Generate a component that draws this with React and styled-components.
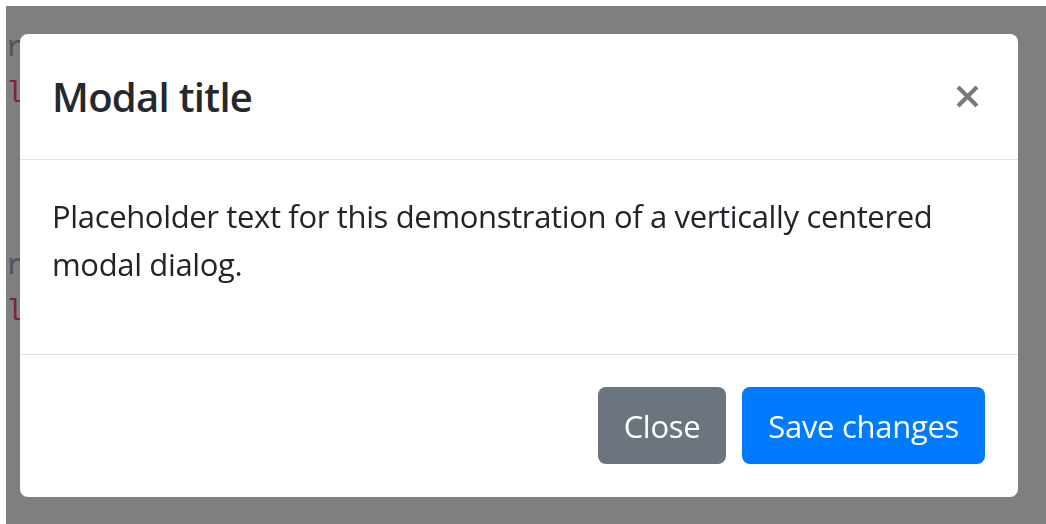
import React from "react";
import styled, { createGlobalStyle } from "styled-components";

const GlobalStyle = createGlobalStyle`
  html, body {
    margin: 0;
    padding: 0;
    background: #fff;
  }
  body {
    font-family: "Open Sans", "Noto Sans", sans-serif;
    overflow: hidden;
  }
`;

// page content sitting behind the backdrop
const Page = styled.div`
  padding: 6px 0 0 6px;
  height: 518px;
`;

const CodeBlock = styled.pre`
  margin: 0;
  padding-top: ${({ top }) => top}px;
  font-family: "Liberation Mono", monospace;
  font-size: 29px;
  line-height: 46px;
  color: #94aac0;
`;

const Attr = styled.span`
  color: #ff4a6e;
`;

const Backdrop = styled.div`
  position: fixed;
  top: 6px;
  left: 6px;
  right: 0;
  bottom: 0;
  background: rgba(0, 0, 0, 0.5);
  padding: 28px 0 0 14px;
`;

const Dialog = styled.div`
  width: 998px;
  background: #fff;
  border-radius: 8px;
  display: flex;
  flex-direction: column;
  color: #212529;
`;

const Header = styled.div`
  display: flex;
  align-items: center;
  justify-content: space-between;
  padding: 32px 38px 32px 32px;
  border-bottom: 1px solid #dee2e6;
`;

const Title = styled.h5`
  margin: 0;
  font-size: 40px;
  font-weight: 600;
  line-height: 61px;
  letter-spacing: -0.7px;
  color: #25282c;
`;

const CloseX = styled.button`
  border: 0;
  background: transparent;
  padding: 0;
  width: 25px;
  height: 25px;
  display: flex;
  cursor: pointer;
`;

const Body = styled.div`
  padding: 32px;
`;

const Text = styled.p`
  margin: 0 0 34px;
  font-size: 31px;
  line-height: 48px;
  letter-spacing: -0.35px;
`;

const Footer = styled.div`
  display: flex;
  justify-content: flex-end;
  gap: 16px;
  padding: 32px 33px 33px 32px;
  border-top: 1px solid #dee2e6;
`;

const Button = styled.button`
  height: 77px;
  padding: 0 26px;
  border: 0;
  border-radius: 8px;
  font-family: inherit;
  font-size: 31px;
  letter-spacing: -0.3px;
  color: #fff;
  background: ${({ variant }) => (variant === "primary" ? "#007bff" : "#6c757d")};
  cursor: pointer;
`;

function App() {
  return (
    <>
      <GlobalStyle />
      <Page>
        <CodeBlock top={20}>
          {"r"}
          {"\n"}
          <Attr>{"l"}</Attr>
        </CodeBlock>
        <CodeBlock top={126}>
          {"r"}
          {"\n"}
          <Attr>{"l"}</Attr>
        </CodeBlock>
      </Page>
      <Backdrop>
        <Dialog role="dialog">
          <Header>
            <Title>Modal title</Title>
            <CloseX aria-label="Close">
              <svg width="25" height="25" viewBox="0 0 25 25">
                <path
                  d="M3 3 L22 22 M22 3 L3 22"
                  stroke="#7a7a7a"
                  strokeWidth="4.2"
                  fill="none"
                />
              </svg>
            </CloseX>
          </Header>
          <Body>
            <Text>
              Placeholder text for this demonstration of a vertically centered
              modal dialog.
            </Text>
          </Body>
          <Footer>
            <Button>Close</Button>
            <Button variant="primary">Save changes</Button>
          </Footer>
        </Dialog>
      </Backdrop>
    </>
  );
}

export default App;
